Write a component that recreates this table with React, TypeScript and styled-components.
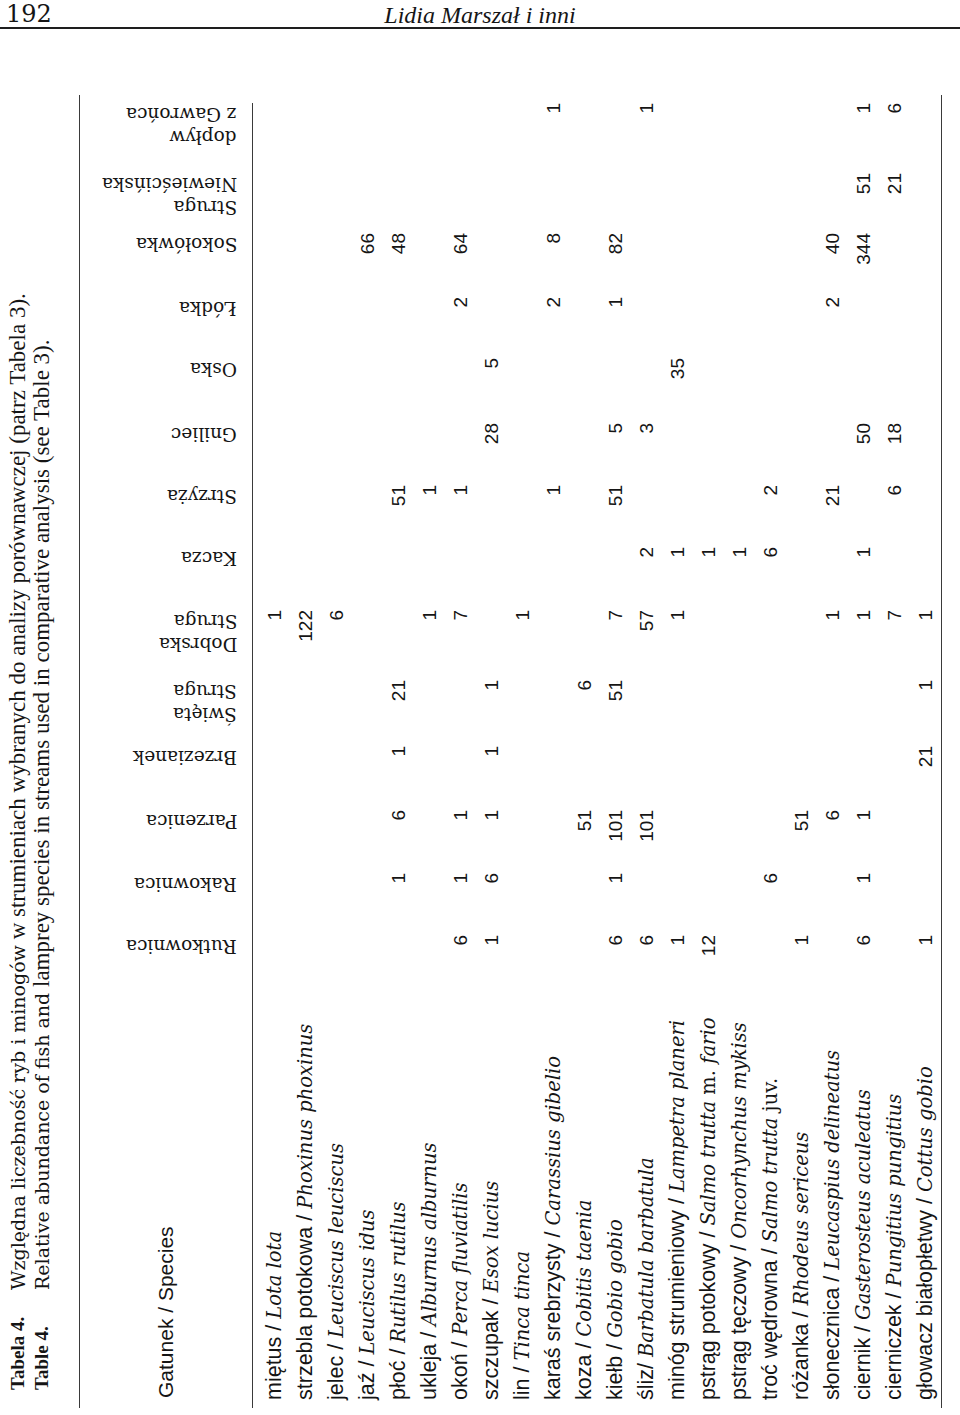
import React from "react";
import styled, { createGlobalStyle } from "styled-components";

const Global = createGlobalStyle`
  html, body { margin: 0; padding: 0; background: #fff; }
  body { width: 960px; height: 1415px; overflow: hidden; color: #151515; }
`;

const Page = styled.div`
  width: 960px;
  height: 1415px;
  overflow: hidden;
  background: #fff;
`;

const RunningHead = styled.header`
  display: grid;
  grid-template-columns: 1fr auto 1fr;
  align-items: end;
  height: 27px;
  padding: 0 6px;
  border-bottom: 2px solid #1e1e1e;
  margin-bottom: 11px;
`;

const Folio = styled.span`
  font-family: "DejaVu Serif", serif;
  font-size: 24px;
  line-height: 25px;
`;

const Authors = styled.span`
  font-family: "Liberation Serif", serif;
  font-style: italic;
  font-size: 24px;
  line-height: 24px;
`;

/* landscape sheet turned a quarter counter-clockwise */
const Stage = styled.div`
  width: 960px;
  height: 1375px;
  overflow: hidden;
`;

const Sheet = styled.div`
  width: 1375px;
  height: 960px;
  box-sizing: border-box;
  padding-top: 6px;
  transform-origin: 0 0;
  transform: translateY(1375px) rotate(-90deg);
`;

const Caption = styled.div`
  padding-left: 25px;
  height: 48px;
  font-family: "Liberation Serif", serif;
  font-size: 23px;
  line-height: 24px;
`;

const CaptionLine = styled.div`
  display: flex;
  height: 24px;
  white-space: nowrap;
`;

const CaptionLabel = styled.span`
  width: 100px;
  flex: none;
  font-weight: bold;
  font-size: 19px;
`;

const Wide = styled.span`
  font-family: "DejaVu Serif", serif;
  font-size: 19px;
`;

const GRID =
  "433px 40px 62px 63px 64px 66px 70px 63px 62px 62px 65px 61px 64px 60px 70px";

const Table = styled.section`
  margin-top: 25px;
  margin-left: 7px;
  width: 1313px;
  box-sizing: border-box;
  padding-right: 8px;
  border-top: 1.5px solid #3a3a3a;
  border-bottom: 1.5px solid #3a3a3a;
`;

const HeadRow = styled.div`
  display: grid;
  grid-template-columns: ${GRID};
  height: 172px;
  border-bottom: 1.5px solid #3a3a3a;
`;

const SpeciesHead = styled.div`
  align-self: center;
  padding-left: 10px;
  font-family: "Liberation Sans", sans-serif;
  font-size: 21px;
  white-space: nowrap;
`;

const ColHead = styled.div`
  display: flex;
  justify-content: flex-end;
  align-items: flex-end;
  padding-bottom: 15px;
  min-width: 0;
`;

const ColHeadText = styled.div`
  writing-mode: vertical-rl;
  transform: rotate(180deg);
  font-family: "DejaVu Serif", serif;
  font-size: 18.5px;
  line-height: 23px;
  white-space: nowrap;
`;

const Body = styled.div`
  padding-top: 5.5px;
`;

const Row = styled.div`
  display: grid;
  grid-template-columns: ${GRID};
  height: 31px;
  line-height: 31px;
`;

const Name = styled.div`
  padding-left: 8px;
  white-space: nowrap;
  font-family: "Liberation Sans", sans-serif;
  font-size: 21.5px;
`;

const Latin = styled.span`
  font-family: "DejaVu Serif", serif;
  font-style: italic;
  font-size: 19.5px;
`;

const Roman = styled.span`
  font-family: "DejaVu Serif", serif;
  font-size: 19.5px;
`;

const Num = styled.div`
  text-align: right;
  white-space: nowrap;
  font-family: "Liberation Sans", sans-serif;
  font-size: 19px;
`;

const COLUMNS: string[][] = [
  ["Rutkownica"],
  ["Rakownica"],
  ["Parzenica"],
  ["Brzezianek"],
  ["Święta", "Struga"],
  ["Dobrska", "Struga"],
  ["Kacza"],
  ["Strzyża"],
  ["Gniliec"],
  ["Oska"],
  ["Łódka"],
  ["Sokołówka"],
  ["Struga", "Niewieścińska"],
  ["dopływ", "z Gawrońca"],
];

type Part = [string, "i" | "r"];
type Species = { pl: string; la: Part[]; n: Record<number, string> };

const ROWS: Species[] = [
  { pl: "miętus / ", la: [["Lota lota", "i"]], n: { 5: "1" } },
  { pl: "strzebla potokowa / ", la: [["Phoxinus phoxinus", "i"]], n: { 5: "122" } },
  { pl: "jelec / ", la: [["Leuciscus leuciscus", "i"]], n: { 5: "6" } },
  { pl: "jaź / ", la: [["Leuciscus idus", "i"]], n: { 11: "66" } },
  { pl: "płoć / ", la: [["Rutilus rutilus", "i"]], n: { 1: "1", 2: "6", 3: "1", 4: "21", 7: "51", 11: "48" } },
  { pl: "ukleja / ", la: [["Alburnus alburnus", "i"]], n: { 5: "1", 7: "1" } },
  { pl: "okoń / ", la: [["Perca fluviatilis", "i"]], n: { 0: "6", 1: "1", 2: "1", 5: "7", 7: "1", 10: "2", 11: "64" } },
  { pl: "szczupak / ", la: [["Esox lucius", "i"]], n: { 0: "1", 1: "6", 2: "1", 3: "1", 4: "1", 8: "28", 9: "5" } },
  { pl: "lin / ", la: [["Tinca tinca", "i"]], n: { 5: "1" } },
  { pl: "karaś srebrzysty / ", la: [["Carassius gibelio", "i"]], n: { 7: "1", 10: "2", 11: "8", 13: "1" } },
  { pl: "koza / ", la: [["Cobitis taenia", "i"]], n: { 2: "51", 4: "6" } },
  { pl: "kiełb / ", la: [["Gobio gobio", "i"]], n: { 0: "6", 1: "1", 2: "101", 4: "51", 5: "7", 7: "51", 8: "5", 10: "1", 11: "82" } },
  { pl: "śliz/ ", la: [["Barbatula barbatula", "i"]], n: { 0: "6", 2: "101", 5: "57", 6: "2", 8: "3", 13: "1" } },
  { pl: "minóg strumieniowy / ", la: [["Lampetra planeri", "i"]], n: { 0: "1", 5: "1", 6: "1", 9: "35" } },
  { pl: "pstrąg potokowy / ", la: [["Salmo trutta", "i"], [" m. ", "r"], ["fario", "i"]], n: { 0: "12", 6: "1" } },
  { pl: "pstrąg tęczowy / ", la: [["Oncorhynchus mykiss", "i"]], n: { 6: "1" } },
  { pl: "troć wędrowna / ", la: [["Salmo trutta", "i"], [" juv.", "r"]], n: { 1: "6", 6: "6", 7: "2" } },
  { pl: "różanka / ", la: [["Rhodeus sericeus", "i"]], n: { 0: "1", 2: "51" } },
  { pl: "słonecznica / ", la: [["Leucaspius delineatus", "i"]], n: { 2: "6", 5: "1", 7: "21", 10: "2", 11: "40" } },
  { pl: "ciernik / ", la: [["Gasterosteus aculeatus", "i"]], n: { 0: "6", 1: "1", 2: "1", 5: "1", 6: "1", 8: "50", 11: "344", 12: "51", 13: "1" } },
  { pl: "cierniczek / ", la: [["Pungitius pungitius", "i"]], n: { 5: "7", 7: "6", 8: "18", 12: "21", 13: "6" } },
  { pl: "głowacz białopłetwy / ", la: [["Cottus gobio", "i"]], n: { 0: "1", 3: "21", 4: "1", 5: "1" } },
];

export default function App() {
  return (
    <Page>
      <Global />
      <RunningHead>
        <Folio>192</Folio>
        <Authors>Lidia Marszał i inni</Authors>
        <span />
      </RunningHead>
      <Stage>
        <Sheet>
          <Caption>
            <CaptionLine>
              <CaptionLabel>Tabela 4.</CaptionLabel>
              <span>
                <Wide>Względna liczebność ryb i minogów</Wide> w strumieniach wybranych do analizy
                porównawczej (patrz Tabela 3).
              </span>
            </CaptionLine>
            <CaptionLine>
              <CaptionLabel>Table 4.</CaptionLabel>
              <span>
                <Wide>Relative abundance of fish and</Wide> lamprey species in streams used in
                comparative analysis (see Table 3).
              </span>
            </CaptionLine>
          </Caption>
          <Table>
            <HeadRow>
              <SpeciesHead>Gatunek / Species</SpeciesHead>
              {COLUMNS.map((lines, i) => (
                <ColHead key={i}>
                  <ColHeadText>
                    {lines.map((l, j) => (
                      <React.Fragment key={j}>
                        {j > 0 && <br />}
                        {l}
                      </React.Fragment>
                    ))}
                  </ColHeadText>
                </ColHead>
              ))}
            </HeadRow>
            <Body>
              {ROWS.map((r, i) => (
                <Row key={i}>
                  <Name>
                    {r.pl}
                    {r.la.map(([t, k], j) =>
                      k === "i" ? <Latin key={j}>{t}</Latin> : <Roman key={j}>{t}</Roman>
                    )}
                  </Name>
                  {COLUMNS.map((_, c) => (
                    <Num key={c}>{r.n[c] ?? ""}</Num>
                  ))}
                </Row>
              ))}
            </Body>
          </Table>
        </Sheet>
      </Stage>
    </Page>
  );
}
